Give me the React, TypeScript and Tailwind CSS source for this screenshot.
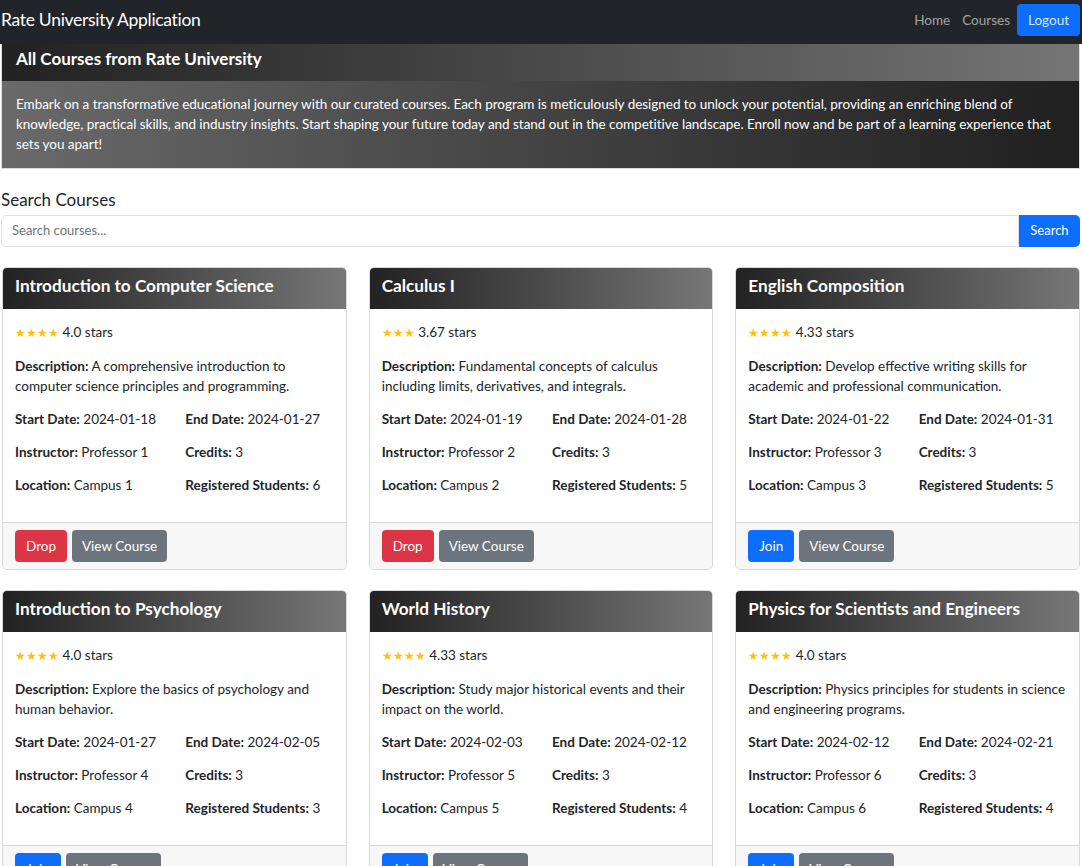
import React from "react";

type Course = {
  title: string;
  stars: string;
  rating: string;
  desc: string;
  start: string;
  end: string;
  n: number;
  students: number;
  joined: boolean;
};

const courses: Course[] = [
  { title: "Introduction to Computer Science", stars: "★★★★", rating: "4.0", desc: "A comprehensive introduction to computer science principles and programming.", start: "2024-01-18", end: "2024-01-27", n: 1, students: 6, joined: true },
  { title: "Calculus I", stars: "★★★", rating: "3.67", desc: "Fundamental concepts of calculus including limits, derivatives, and integrals.", start: "2024-01-19", end: "2024-01-28", n: 2, students: 5, joined: true },
  { title: "English Composition", stars: "★★★★", rating: "4.33", desc: "Develop effective writing skills for academic and professional communication.", start: "2024-01-22", end: "2024-01-31", n: 3, students: 5, joined: false },
  { title: "Introduction to Psychology", stars: "★★★★", rating: "4.0", desc: "Explore the basics of psychology and human behavior.", start: "2024-01-27", end: "2024-02-05", n: 4, students: 3, joined: false },
  { title: "World History", stars: "★★★★", rating: "4.33", desc: "Study major historical events and their impact on the world.", start: "2024-02-03", end: "2024-02-12", n: 5, students: 4, joined: false },
  { title: "Physics for Scientists and Engineers", stars: "★★★★", rating: "4.0", desc: "Physics principles for students in science and engineering programs.", start: "2024-02-12", end: "2024-02-21", n: 6, students: 4, joined: false },
];

function Field({ label, value }: { label: string; value: React.ReactNode }) {
  return (
    <div className="leading-[20px] whitespace-nowrap">
      <span className="font-bold">{label}</span> {value}
    </div>
  );
}

function CourseCard({ c }: { c: Course }) {
  return (
    <div className="flex flex-col rounded-[5px] border border-[#d9d9d9] overflow-hidden bg-white">
      <div className="h-[41px] flex items-center px-[12px] pb-[5px] bg-gradient-to-r from-[#222222] to-[#777777]">
        <h3 className="text-white font-bold text-[17.2px]">{c.title}</h3>
      </div>
      <div className="px-[12px] pt-[13px] pb-[27px] text-[13.5px] text-[#212529]">
        <div className="leading-[20px] mb-[13px]">
          <span className="text-[#ffc107] text-[12px]">{c.stars}</span> {c.rating} stars
        </div>
        <p className="leading-[20px] mb-[13px]">
          <span className="font-bold">Description:</span> {c.desc}
        </p>
        <div className="grid grid-cols-2 gap-x-[22px] gap-y-[13px]">
          <Field label="Start Date:" value={c.start} />
          <Field label="End Date:" value={c.end} />
          <Field label="Instructor:" value={`Professor ${c.n}`} />
          <Field label="Credits:" value="3" />
          <Field label="Location:" value={`Campus ${c.n}`} />
          <Field label="Registered Students:" value={c.students} />
        </div>
      </div>
      <div className="mt-auto border-t border-[#d9d9d9] bg-[#f7f7f7] px-[12px] py-[7px] flex gap-[5px] text-[13.5px]">
        {c.joined ? (
          <button className="h-[32px] px-[11px] rounded-[4px] bg-[#dc3545] text-white">Drop</button>
        ) : (
          <button className="h-[32px] px-[11px] rounded-[4px] bg-[#0d6efd] text-white">Join</button>
        )}
        <button className="h-[32px] px-[10px] rounded-[4px] bg-[#6c757d] text-white">View Course</button>
      </div>
    </div>
  );
}

export default function App() {
  return (
    <div className="min-h-screen bg-white text-[#212529]" style={{ fontFamily: "Lato, 'Noto Sans', sans-serif" }}>
      <nav className="h-[44px] bg-[#212529] flex items-center justify-between pl-[1px] pr-[2px] pb-[4px]">
        <span className="text-white text-[17.5px] tracking-[-0.3px]">Rate University Application</span>
        <div className="flex items-center text-[13.5px]">
          <a className="text-[#a1a3a5] mr-[12px]">Home</a>
          <a className="text-[#a1a3a5] mr-[7px]">Courses</a>
          <button className="h-[32px] w-[63px] rounded-[4px] bg-[#0d6efd] text-[#dbe6ff]">Logout</button>
        </div>
      </nav>

      <div className="ml-[1px] mr-[2px] border border-[#dcdcdc] border-t-0">
        <div className="h-[37px] flex items-center px-[14px] pb-[8px] bg-gradient-to-r from-[#222222] to-[#757575]">
          <h2 className="text-white font-bold text-[17px]">All Courses from Rate University</h2>
        </div>
        <div className="px-[14px] pt-[13px] pb-[14px] bg-gradient-to-r from-[#6a6a6a] to-[#202020] text-white text-[13.5px] leading-[20px] tracking-[-0.03px]">
          Embark on a transformative educational journey with our curated courses. Each program is meticulously designed to unlock your potential, providing an enriching blend of knowledge, practical skills, and industry insights. Start shaping your future today and stand out in the competitive landscape. Enroll now and be part of a learning experience that sets you apart!
        </div>
      </div>

      <div className="pl-[1px] pr-[2px] mt-[20px]">
        <h4 className="text-[17px] leading-[22px] text-[#212529]">Search Courses</h4>
        <div className="flex mt-[4px] h-[32px]">
          <input
            className="flex-1 border border-[#dee2e6] rounded-l-[5px] px-[10px] text-[13px] outline-none placeholder:text-[#6c757d]"
            placeholder="Search courses..."
          />
          <button className="w-[61px] bg-[#0d6efd] text-white text-[13px] rounded-r-[5px]">Search</button>
        </div>
      </div>

      <div className="grid grid-cols-3 gap-x-[22px] gap-y-[20px] pl-[2px] pr-[2px] mt-[20px]">
        {courses.map((c) => (
          <CourseCard key={c.title} c={c} />
        ))}
      </div>
    </div>
  );
}
